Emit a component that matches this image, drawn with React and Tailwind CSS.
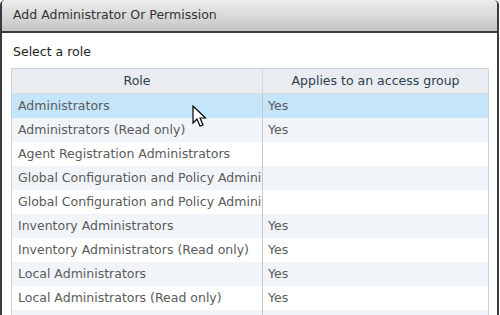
export default function App() {
  const rows = [
    ["Administrators", "Yes"],
    ["Administrators (Read only)", "Yes"],
    ["Agent Registration Administrators", ""],
    ["Global Configuration and Policy Administrators", ""],
    ["Global Configuration and Policy Administrators (Read only)", ""],
    ["Inventory Administrators", "Yes"],
    ["Inventory Administrators (Read only)", "Yes"],
    ["Local Administrators", "Yes"],
    ["Local Administrators (Read only)", "Yes"],
    ["", ""],
  ];
  return (
    <div className="relative w-[500px] h-[315px] overflow-hidden bg-white" style={{ fontFamily: '"DejaVu Sans", Verdana, sans-serif' }}>
      <div className="w-[499px] h-[330px] border-x-2 border-[#3a3a3a] rounded-t-[5px] flex flex-col bg-white">
        <div className="h-[33px] shrink-0 border-b-2 border-[#3a3a3a] rounded-t-[4px] bg-gradient-to-b from-[#ececec] via-[#dadada] to-[#c4c4c4] flex items-center pl-[11px] text-[12.5px] text-[#333]">
          Add Administrator Or Permission
        </div>
        <div className="pl-[9px] pr-[8px] pt-[10px] flex flex-col">
          <div className="pl-[2px] text-[12.5px] text-[#222] leading-[17px]">Select a role</div>
          <div className="mt-[8px] border border-[#cfd4d9] w-[478px] text-[12.5px] leading-[24px]">
            <div className="grid grid-cols-[251px_1fr] bg-[#e9edf1] text-[#2c3e4c] border-b border-[#d8dde2]">
              <div className="text-center border-r border-[#d4d9de]">Role</div>
              <div className="text-center">Applies to an access group</div>
            </div>
            {rows.map((r, i) => (
              <div
                key={i}
                className={
                  "grid grid-cols-[251px_1fr] h-[24px] text-[#5a5a5a] " +
                  (i === 0 ? "bg-[#c5e5fb]" : i % 2 === 1 ? "bg-[#f1f5fa]" : "bg-white")
                }
              >
                <div className="pl-[6px] border-r border-[#c8c8c8] whitespace-nowrap overflow-hidden">{r[0]}</div>
                <div className="pl-[5px]">{r[1]}</div>
              </div>
            ))}
          </div>
        </div>
      </div>
      <svg className="absolute left-[192px] top-[105px]" width="15" height="23" viewBox="0 0 15 23">
        <path d="M1 1 L1 18 L5 14 L8 21 L11 20 L8 13 L13.5 13 Z" fill="white" stroke="black" strokeWidth="1.2" strokeLinejoin="miter" />
      </svg>
    </div>
  );
}
